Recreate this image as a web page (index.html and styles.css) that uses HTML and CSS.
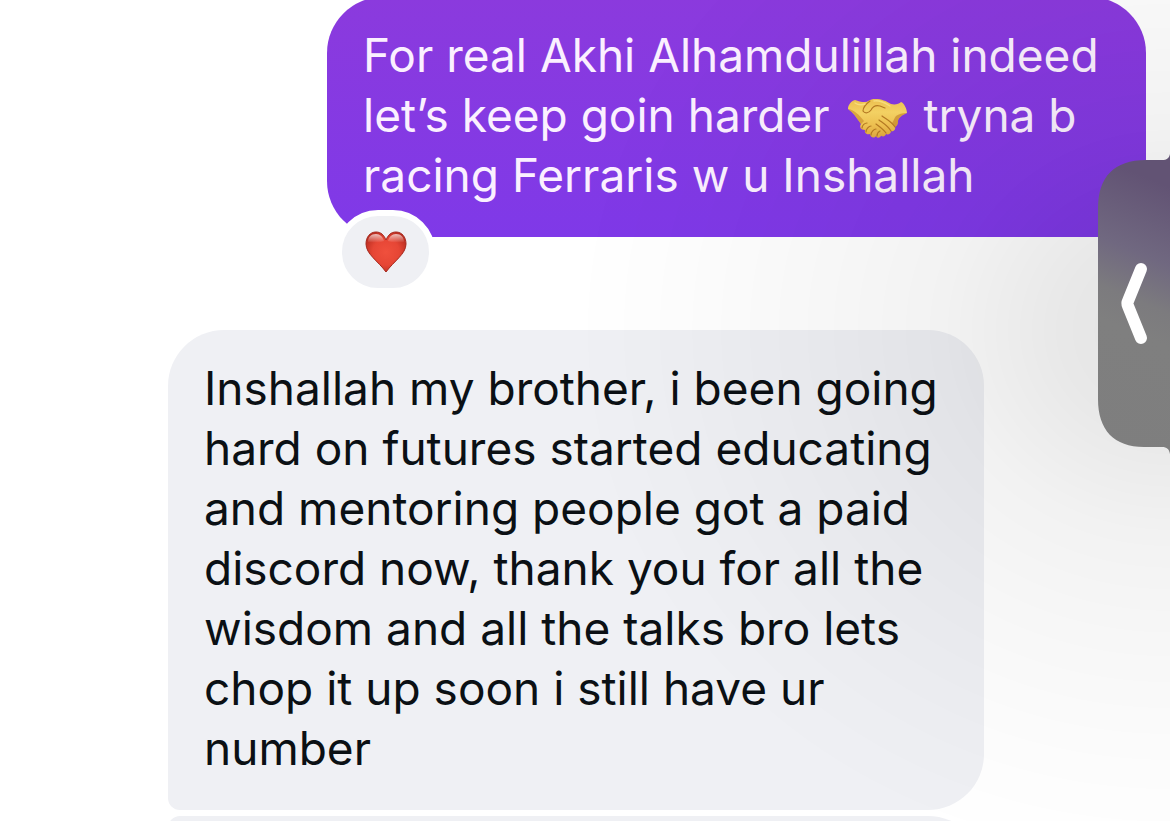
FILE: index.html
```html
<!DOCTYPE html>
<html lang="en">
<head>
  <meta charset="UTF-8" />
  <title>Messages</title>
  <meta name="viewport" content="width=device-width, initial-scale=1.0" />
  <link rel="stylesheet" href="styles.css">
</head>
<body>
  <main class="thread">
    <div class="bubble sent">
      For real Akhi Alhamdulillah indeed let’s keep goin harder
      <svg class="emoji" viewBox="0 0 60 44" role="img" aria-label="handshake">
        <defs>
          <linearGradient id="skin" x1="0" y1="0" x2="0" y2="1">
            <stop offset="0" stop-color="#f3c552" />
            <stop offset="0.35" stop-color="#fad766" />
            <stop offset="0.7" stop-color="#f3c553" />
            <stop offset="1" stop-color="#e3aa40" />
          </linearGradient>
        </defs>
        <!-- left hand with its fingertips -->
        <path fill="url(#skin)" d="M8 3C4 4 1 8 1 12c5 3 8 8 13 15-2 3 0 6 4 6-1 3 2 5 5 4 0 3 4 5 6 2 1 3 5 2 5-1 3-1 10-4 14-9L44 14 24 4c-6 2-11 1-16-1z" />
        <path fill="#cf8d2c" opacity=".6" d="M1 12c5 3 8 8 13 15l3-3C12 18 8 13 1 12z" />
        <!-- right hand over it -->
        <path fill="url(#skin)" d="M17 15c-2-1-2-3 0-6 3-5 6-7 11-7 7 0 11 2 16 5 4 1 8 0 10-2 3 1 6 7 6 11-5 2-9 5-9 8 0 3-1 5-3 6 1 3-2 5-4 4 0 3-3 4-5 3-1 3-4 3-6 1l-9-8-2-14c-1 0 1-5-5-1z" />
        <path fill="#c98728" opacity=".65" d="M60 16c-5 2-9 5-9 8 0 3-1 5-3 6l-3-4c2-2 2-5 4-7 3-2 6-3 11-3z" />
        <g fill="none" stroke="#b97c24" stroke-width="1.2" stroke-linecap="round" stroke-linejoin="round">
          <path d="M23 4c-4 3-7 7-7 10 2 3 6 2 8-1 2-4 5-5 9-4l5 2" />
          <path d="M35 19c4 3 9 5 13 11M32 23c4 3 9 6 12 11M29 27c4 3 7 5 10 9" />
          <path d="M15 31c0-3 3-5 5-5M19 35c0-3 3-6 5-6M24 38c0-3 3-6 5-6M30 39c0-2 1-4 3-5" />
        </g>
        <path fill="none" stroke="#ffe88a" stroke-width="1.4" stroke-linecap="round" opacity=".8" d="M27 4c6-1 11 2 16 5M8 6c3 2 7 2 10 1" />
      </svg>
      tryna b racing Ferraris w u Inshallah
      <button class="reaction" aria-label="Loved">
        <svg class="heart" viewBox="0 0 42 42" aria-hidden="true">
          <defs>
            <radialGradient id="red" cx="0.5" cy="0.5" r="0.6">
              <stop offset="0" stop-color="#f0503d" />
              <stop offset="0.55" stop-color="#e64635" />
              <stop offset="1" stop-color="#b42a1e" />
            </radialGradient>
            <linearGradient id="shine" x1="0" y1="0" x2="0" y2="1">
              <stop offset="0" stop-color="#fff" stop-opacity=".7" />
              <stop offset="1" stop-color="#fff" stop-opacity="0" />
            </linearGradient>
          </defs>
          <path fill="url(#red)" stroke="#a5291e" stroke-width="1" stroke-linejoin="round" d="M21 9C19 4 16 1 11 1 5 1 1 6 1 13c0 10 12 17 20 28 8-11 20-18 20-28 0-7-4-12-10-12-5 0-8 3-10 8z" />
          <path fill="url(#shine)" d="M3 11c0-5 3-8 8-8 4 0 7 3 8 7-5 2-11 2-16 1zM39 11c0-5-3-8-8-8-4 0-7 3-8 7 5 2 11 2 16 1z" />
        </svg>
      </button>
    </div>

    <div class="bubble received">
      Inshallah my brother, i been going hard on futures started educating and mentoring people got a paid discord now, thank you for all the wisdom and all the talks bro lets chop it up soon i still have ur number
    </div>
    <div class="bubble received next"></div>
  </main>

  <div class="shade"></div>

  <button class="drawer" aria-label="Open panel">
    <svg class="drawer-icon" viewBox="0 0 72 300" aria-hidden="true">
      <defs>
        <linearGradient id="tab" x1="0.1" y1="0" x2="0" y2="1">
          <stop offset="0.02" stop-color="#625374" />
          <stop offset="0.28" stop-color="#706880" />
          <stop offset="0.44" stop-color="#7c7b7e" />
          <stop offset="0.55" stop-color="#7f7f7f" />
          <stop offset="1" stop-color="#7e7e7e" />
        </linearGradient>
      </defs>
      <path fill="url(#tab)" d="M72 0c-1 4-3 6-8 6H48C16 6 0 23 0 54v191c0 31 16 48 46 48h18c5 0 7 2 8 7z" />
      <path fill="none" stroke="#fff" stroke-width="12" stroke-linecap="round" stroke-linejoin="round" d="M43 115L30 147c-1 2-1 3 0 5l13 32" />
    </svg>
  </button>
</body>
</html>
```
FILE: styles.css
```css
:root {
  --purple-top: #8b3add;
  --purple: #7f39e8;
  --gray: #eff0f4;
  --text-dark: #0b1014;
  --white: #ffffff;
}

* {
  box-sizing: border-box;
}

body {
  margin: 0;
  height: 100vh;
  overflow: hidden;
  background: var(--white);
  font-family: Inter, "Liberation Sans", sans-serif;
}

.thread {
  display: flex;
  flex-direction: column;
  gap: 6px;
  margin-top: -3px;
  padding: 0 24px 0 168px;
}

.bubble {
  padding: 28px 36px 32px;
  font-size: 46px;
  line-height: 60px;
}

.sent {
  position: relative;
  margin: 0 0 87px 159px;
  border-radius: 56px 56px 12px 56px;
  background: linear-gradient(var(--purple-top), var(--purple));
  color: #fbf0ff;
}

.received {
  margin-right: 162px;
  border-radius: 56px 56px 56px 12px;
  background: var(--gray);
  color: var(--text-dark);
}

/* next message, only its top edge is in view */
.next {
  min-height: 120px;
  border-radius: 12px 56px 56px 12px;
}

.emoji {
  width: 60px;
  height: 44px;
  margin: 0 4px;
  vertical-align: -9px;
}

.reaction {
  position: absolute;
  left: 9px;
  bottom: -57px;
  display: flex;
  align-items: center;
  justify-content: center;
  width: 99px;
  height: 84px;
  padding: 0;
  border: 6px solid var(--white);
  border-radius: 42px;
  background: var(--gray);
  cursor: pointer;
}

.heart {
  width: 42px;
  height: 42px;
}

/* soft shadow cast by the drawer tab */
.shade {
  position: fixed;
  inset: 0;
  background: radial-gradient(600px 540px at 100% 330px,
    rgba(0, 0, 0, 0.11) 0%,
    rgba(0, 0, 0, 0.09) 18%,
    rgba(0, 0, 0, 0.05) 38%,
    rgba(0, 0, 0, 0.03) 58%,
    rgba(0, 0, 0, 0.01) 82%,
    rgba(0, 0, 0, 0) 100%);
  pointer-events: none;
}

.drawer {
  position: fixed;
  top: 154px;
  right: 0;
  width: 72px;
  height: 300px;
  padding: 0;
  border: none;
  background: none;
  cursor: pointer;
}

.drawer-icon {
  display: block;
  width: 100%;
  height: 100%;
}
```
